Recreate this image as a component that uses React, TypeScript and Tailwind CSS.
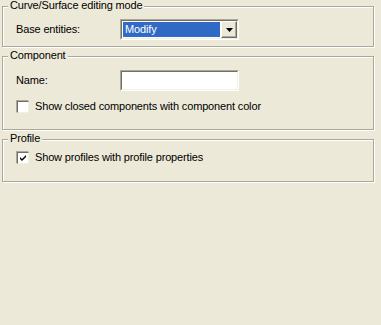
import React from "react";

const font = { fontFamily: "Tahoma, 'Liberation Sans', Arial, sans-serif" };

function Group({ title, className, children }: { title: string; className: string; children: React.ReactNode }) {
  return (
    <div className={`relative mx-[2px] border border-[#aca899] shadow-[inset_1px_1px_0_#ffffff,1px_1px_0_#ffffff] ${className}`}>
      <div className="absolute left-[5px] top-[-8px] bg-[#ece9d8] px-[2px] text-[11px] leading-[13px] tracking-[-0.15px] text-black">{title}</div>
      {children}
    </div>
  );
}

function Check({ checked, label }: { checked?: boolean; label: string }) {
  return (
    <div className="flex items-center">
      <div className="box-border h-[13px] w-[13px] border-t border-l border-t-[#aca899] border-l-[#aca899] border-b border-r border-b-white border-r-white">
        <div className="flex h-[12px] w-[12px] items-center justify-center border-t border-l border-t-[#716f64] border-l-[#716f64] border-b border-r border-b-[#f1efe2] border-r-[#f1efe2] bg-white">
          {checked && (
            <svg width="7" height="7" viewBox="0 0 7 7">
              <path d="M0 2 L2 4 L6 0 L6 2 L2 6 L0 4 Z" fill="#000" />
            </svg>
          )}
        </div>
      </div>
      <span className="ml-[6px] text-[11px] leading-[13px] tracking-[-0.15px] text-black">{label}</span>
    </div>
  );
}

function Sunken({ children, className }: { children?: React.ReactNode; className: string }) {
  return (
    <div className={`box-border border-t border-l border-t-[#aca899] border-l-[#aca899] border-b border-r border-b-white border-r-white ${className}`}>
      <div className="box-border flex h-full w-full border-t border-l border-t-[#716f64] border-l-[#716f64] border-b border-r border-b-[#f1efe2] border-r-[#f1efe2] bg-white">
        {children}
      </div>
    </div>
  );
}

export default function App() {
  return (
    <div className="h-[325px] w-[381px] overflow-hidden bg-[#ece9d8] pr-[5px]" style={font}>
      <Group title="Curve/Surface editing mode" className="mt-[6px] h-[41px]">
        <div className="flex items-center pl-[13px] pt-[12px]">
          <span className="w-[104px] text-[11px] leading-[13px] tracking-[-0.15px] text-black">Base entities:</span>
          <Sunken className="h-[21px] w-[119px]">
            <div className="m-[1px] flex flex-1 items-center bg-[#316ac5] pl-[2px] text-[11px] leading-[13px] tracking-[-0.15px] text-white">Modify</div>
            <div className="box-border flex w-[16px] items-center justify-center border-t border-l border-t-white border-l-white border-b border-r border-b-[#716f64] border-r-[#716f64] bg-[#ece9d8] shadow-[inset_-1px_-1px_0_#aca899]">
              <svg width="7" height="4" viewBox="0 0 7 4">
                <path d="M0 0 H7 L3.5 4 Z" fill="#000" />
              </svg>
            </div>
          </Sunken>
        </div>
      </Group>
      <Group title="Component" className="mt-[9px] h-[74px]">
        <div className="flex items-center pl-[13px] pt-[13px]">
          <span className="w-[104px] text-[11px] leading-[13px] tracking-[-0.15px] text-black">Name:</span>
          <Sunken className="h-[21px] w-[119px]" />
        </div>
        <div className="pl-[13px] pt-[9px]">
          <Check label="Show closed components with component color" />
        </div>
      </Group>
      <Group title="Profile" className="mt-[9px] h-[43px]">
        <div className="pl-[13px] pt-[11px]">
          <Check checked label="Show profiles with profile properties" />
        </div>
      </Group>
    </div>
  );
}
